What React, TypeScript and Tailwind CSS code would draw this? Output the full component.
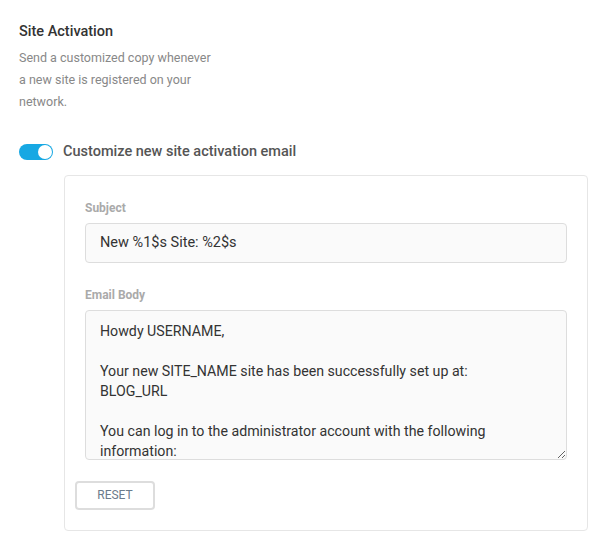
import { FC } from 'react';

const BODY = `Howdy USERNAME,

Your new SITE_NAME site has been successfully set up at:
BLOG_URL

You can log in to the administrator account with the following information:

Username: USERNAME
Password: PASSWORD
Log in here: BLOG_URLwp-login.php

We hope you enjoy your new site. Thanks!

--The Team @ SITE_NAME`;

const App: FC = () => {
  return (
    <div className="min-h-[554px] w-[610px] bg-white font-['Roboto',sans-serif] pl-[19px] pr-[22px] pt-[22px]">
      <h3 className="text-[14.5px] leading-[20px] font-medium text-[#333]">Site Activation</h3>
      <p className="mt-[5px] w-[200px] text-[12.5px] leading-[22px] text-[#888]">
        Send a customized copy whenever a new site is registered on your network.
      </p>

      <div className="mt-[28px] flex items-center gap-[10px]">
        <span className="relative inline-flex h-[16px] w-[34px] items-center rounded-full bg-[#17a8e3]">
          <span className="absolute right-[1px] h-[14px] w-[14px] rounded-full bg-white" />
        </span>
        <span className="text-[14.5px] font-medium text-[#555]">Customize new site activation email</span>
      </div>

      <div className="ml-[45px] mt-[12px] rounded-[4px] border border-[#e6e6e6] px-[20px] pt-[24px] pb-[20px]">
        <label className="block text-[12px] font-bold leading-[16px] text-[#aaa]">Subject</label>
        <input
          readOnly
          value="New %1$s Site: %2$s"
          className="mt-[7px] block h-[40px] w-full rounded-[4px] border border-[#ddd] bg-[#fafafa] px-[14px] text-[14.5px] text-[#333] outline-none"
        />

        <label className="mt-[24px] block text-[12px] font-bold leading-[16px] text-[#aaa]">Email Body</label>
        <textarea
          readOnly
          defaultValue={BODY}
          className="mt-[7px] block h-[150px] w-full resize-y overflow-hidden rounded-[4px] border border-[#ddd] bg-[#fafafa] px-[14px] py-[10px] text-[14.2px] leading-[20px] text-[#333] outline-none"
        />

        <button className="-ml-[10px] mt-[21px] h-[29px] w-[80px] rounded-[4px] border-2 border-[#ddd] bg-white text-[12px] font-normal text-[#6b7b8c]">
          RESET
        </button>
      </div>
    </div>
  );
};

export default App;
